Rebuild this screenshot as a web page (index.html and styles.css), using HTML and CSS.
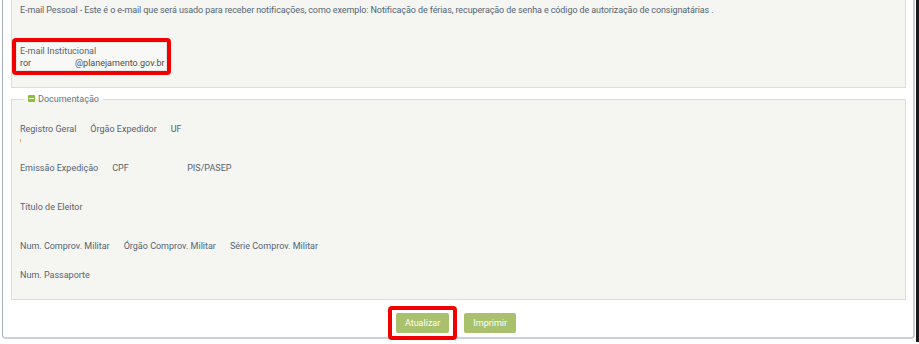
FILE: index.html
```html
<!DOCTYPE html>
<html lang="pt-BR">
<head>
  <meta charset="UTF-8">
  <title>Dados Pessoais</title>
  <link rel="stylesheet" href="styles.css">
</head>
<body>
<div class="screen">
  <div class="window">

    <fieldset class="box box-top">
      <p class="note">E-mail Pessoal - Este é o e-mail que será usado para receber notificações, como exemplo: Notificação de férias, recuperação de senha e código de autorização de consignatárias .</p>

      <div class="highlight mail">
        <div class="mail-inner">
          <div class="label">E-mail Institucional</div>
          <div class="value"><span class="user">ror</span>@planejamento.gov.br</div>
        </div>
      </div>
    </fieldset>

    <fieldset class="box box-docs">
      <legend><span class="toggle"></span>Documentação</legend>

      <div class="row row-1">
        <div class="field">
          <span class="label">Registro Geral</span>
          <span class="caret"></span>
        </div>
        <div class="field"><span class="label">Órgão Expedidor</span></div>
        <div class="field"><span class="label">UF</span></div>
      </div>

      <div class="row row-2">
        <div class="field"><span class="label">Emissão Expedição</span></div>
        <div class="field cpf"><span class="label">CPF</span></div>
        <div class="field"><span class="label">PIS/PASEP</span></div>
      </div>

      <div class="row row-3">
        <div class="field"><span class="label">Título de Eleitor</span></div>
      </div>

      <div class="row row-4">
        <div class="field"><span class="label">Num. Comprov. Militar</span></div>
        <div class="field"><span class="label">Órgão Comprov. Militar</span></div>
        <div class="field"><span class="label">Série Comprov. Militar</span></div>
      </div>

      <div class="row row-5">
        <div class="field"><span class="label">Num. Passaporte</span></div>
      </div>
    </fieldset>

    <div class="actions">
      <div class="highlight">
        <button type="button" class="btn">Atualizar</button>
      </div>
      <button type="button" class="btn">Imprimir</button>
    </div>

  </div>
  <div class="edge"></div>
</div>
</body>
</html>
```

FILE: styles.css
```css
body {
  margin: 0;
  background-color: #fff;
  font-family: Roboto, "Liberation Sans", sans-serif;
  font-size: 9px;
  color: #56636f;
}

.screen {
  display: flex;
  height: 344px;
}

.window {
  margin-left: 2px;
  width: 910px;
  height: 337px;
  border-left: 1px solid #a7b0b9;
  border-right: 2px solid #c9d0d6;
  border-bottom: 2px solid #c9d0d6;
  border-bottom-left-radius: 4px;
  border-bottom-right-radius: 4px;
  box-sizing: content-box;
}

.edge {
  width: 3px;
  height: 342px;
  margin-left: 1px;
  background-color: #1a1a1a;
}

.box {
  margin: 0 7px 0 8px;
  padding: 0 8px;
  background-color: #f5f6f2;
  border: 1px solid #dcdcd8;
  min-width: 0;
}

.box-top {
  border-top: none;
  height: 88px;
  box-sizing: border-box;
  padding-top: 5px;
}

.note {
  margin: 0;
  line-height: 11px;
  letter-spacing: -0.1px;
}

.highlight {
  display: inline-block;
  border: 4px solid #f20000;
  border-radius: 4px;
}

.mail {
  margin: 22px 0 0 -8px;
}

.mail-inner {
  width: 144px;
  padding: 2px 2px 1px 3px;
  background-color: #f8f9f6;
  border: 1px solid #e3e3df;
  line-height: 12px;
  white-space: nowrap;
}

.user {
  display: inline-block;
  width: 55px;
}

.value {
  color: #4c4c4c;
}

.box-docs {
  margin-top: 5px;
  height: 207px;
  box-sizing: border-box;
  padding-top: 0;
}

legend {
  padding: 0 4px;
  margin-left: 4px;
  line-height: 12px;
  color: #6a7580;
}

.toggle {
  display: inline-block;
  width: 7px;
  height: 7px;
  margin-right: 3px;
  background-color: #8dbd3b;
  border-radius: 1px;
  position: relative;
  top: -1px;
  vertical-align: middle;
}

.toggle::after {
  content: "";
  position: absolute;
  left: 1px;
  right: 1px;
  top: 3px;
  height: 1px;
  background-color: #fff;
}

.row {
  display: flex;
  gap: 14px;
  line-height: 12px;
}

.row-1 { margin-top: 18px; height: 39px; }
.row-2 { height: 39px; }
.row-3 { height: 39px; }
.row-4 { height: 29px; }
.row-5 { height: 20px; }

.field {
  position: relative;
}

.cpf {
  width: 61px;
}

.caret {
  position: absolute;
  left: 0;
  top: 16px;
  width: 1px;
  height: 3px;
  background-color: #f4b24a;
}

.actions {
  display: flex;
  justify-content: center;
  align-items: center;
  gap: 7px;
  margin-top: 6px;
  padding-right: 12px;
}

.btn {
  font-family: Roboto, "Liberation Sans", sans-serif;
  font-size: 9px;
  color: #fff;
  background-color: #a9c06c;
  border: none;
  border-radius: 2px;
  height: 20px;
  padding: 0 9px;
  margin: 0;
}

.highlight .btn {
  margin: 3px 4px;
}
```
